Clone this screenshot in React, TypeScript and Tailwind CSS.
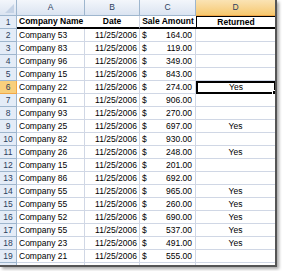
import React from "react";

const rows: [number, string, string, string][] = [
  [2, "Company 53", "164.00", ""],
  [3, "Company 83", "119.00", ""],
  [4, "Company 96", "349.00", ""],
  [5, "Company 15", "843.00", ""],
  [6, "Company 22", "274.00", "Yes"],
  [7, "Company 61", "906.00", ""],
  [8, "Company 93", "270.00", ""],
  [9, "Company 25", "697.00", "Yes"],
  [10, "Company 82", "930.00", ""],
  [11, "Company 26", "248.00", "Yes"],
  [12, "Company 15", "201.00", ""],
  [13, "Company 86", "692.00", ""],
  [14, "Company 55", "965.00", "Yes"],
  [15, "Company 55", "260.00", "Yes"],
  [16, "Company 52", "690.00", "Yes"],
  [17, "Company 55", "537.00", "Yes"],
  [18, "Company 23", "491.00", "Yes"],
  [19, "Company 21", "555.00", ""],
];

export default function App() {
  return (
    <div className="w-[282px] h-[271px] bg-white overflow-hidden" style={{ fontFamily: "'Liberation Sans Narrow', 'Arial Narrow', 'Liberation Sans', sans-serif" }}>
      <div className="w-[277px] h-[267px] overflow-hidden border-r-2 border-b-2 border-[#555] shadow-[2px_2px_3px_rgba(0,0,0,0.35)] bg-white text-[8.5px] leading-none text-black whitespace-nowrap">
        {/* header row */}
        <div className="flex h-[16px]">
          <div className="w-[17px] shrink-0 h-full bg-gradient-to-b from-[#f3f6fb] to-[#dbe4f1] border-r border-b border-[#9eb6ce] relative">
            <div className="absolute right-[2px] bottom-[2px] w-0 h-0 border-l-[9px] border-l-transparent border-b-[9px] border-b-[#c5d3e6]" />
          </div>
          <div className="w-[68px] shrink-0 h-full bg-gradient-to-b from-[#f3f6fb] to-[#dbe4f1] border-r border-b border-[#9eb6ce] flex items-center justify-center text-[#2c3e5c]">A</div>
          <div className="w-[55px] shrink-0 h-full bg-gradient-to-b from-[#f3f6fb] to-[#dbe4f1] border-r border-b border-[#9eb6ce] flex items-center justify-center text-[#2c3e5c]">B</div>
          <div className="w-[56px] shrink-0 h-full bg-gradient-to-b from-[#f3f6fb] to-[#dbe4f1] border-r border-b border-[#9eb6ce] flex items-center justify-center text-[#2c3e5c]">C</div>
          <div className="w-[80px] shrink-0 h-full bg-gradient-to-b from-[#fae3b4] to-[#f6c86e] border-r border-b border-[#f2a848] flex items-center justify-center text-[#2c3e5c]">D</div>
        </div>
        {/* row 1 */}
        <div className="flex h-[13px]">
          <div className="w-[17px] shrink-0 h-full bg-[#e4ecf7] border-r border-b border-[#9eb6ce] flex items-center justify-center text-[#2c3e5c]">1</div>
          <div className="w-[68px] shrink-0 h-full border-b-2 border-black flex items-center pl-[2px] font-bold">Company Name</div>
          <div className="w-[55px] shrink-0 h-full border-r border-r-[#d0d7e5] border-b-2 border-b-black flex items-center justify-center font-bold">Date</div>
          <div className="w-[56px] shrink-0 h-full border-b-2 border-black flex items-center justify-center font-bold">Sale Amount</div>
          <div className="w-[80px] shrink-0 h-full border border-b-2 border-black flex items-center justify-center font-bold">Returned</div>
        </div>
        {rows.map(([n, name, amt, ret]) => {
          const sel = n === 6;
          return (
            <div key={n} className="flex h-[13px]">
              <div className={`w-[17px] shrink-0 h-full border-r border-b flex items-center justify-center ${sel ? "bg-[#f8cf7c] border-[#f2a848] text-[#2c3e5c]" : "bg-[#e4ecf7] border-[#9eb6ce] text-[#2c3e5c]"}`}>{n}</div>
              <div className="w-[68px] shrink-0 h-full border-r border-b border-[#d0d7e5] flex items-center pl-[2px]">{name}</div>
              <div className="w-[55px] shrink-0 h-full border-r border-b border-[#d0d7e5] flex items-center justify-end pr-[2px]">11/25/2006</div>
              <div className="w-[56px] shrink-0 h-full border-r border-b border-[#d0d7e5] flex items-center justify-between pl-[2px] pr-[3px]">
                <span>$</span>
                <span>{amt}</span>
              </div>
              {sel ? (
                <div className="w-[80px] shrink-0 h-full border-2 border-black flex items-center justify-center relative">
                  {ret}
                  <div className="absolute right-[-3px] bottom-[-3px] w-[5px] h-[5px] bg-black border border-white" />
                </div>
              ) : (
                <div className="w-[80px] shrink-0 h-full border-r border-b border-[#d0d7e5] flex items-center justify-center">{ret}</div>
              )}
            </div>
          );
        })}
        <div className="flex h-[13px]">
          <div className="w-[17px] shrink-0 h-full bg-[#e4ecf7] border-r border-[#9eb6ce]" />
          <div className="w-[68px] shrink-0 h-full border-r border-[#d0d7e5]" />
          <div className="w-[55px] shrink-0 h-full border-r border-[#d0d7e5]" />
          <div className="w-[56px] shrink-0 h-full border-r border-[#d0d7e5]" />
          <div className="w-[80px] shrink-0 h-full border-r border-[#d0d7e5]" />
        </div>
      </div>
    </div>
  );
}
